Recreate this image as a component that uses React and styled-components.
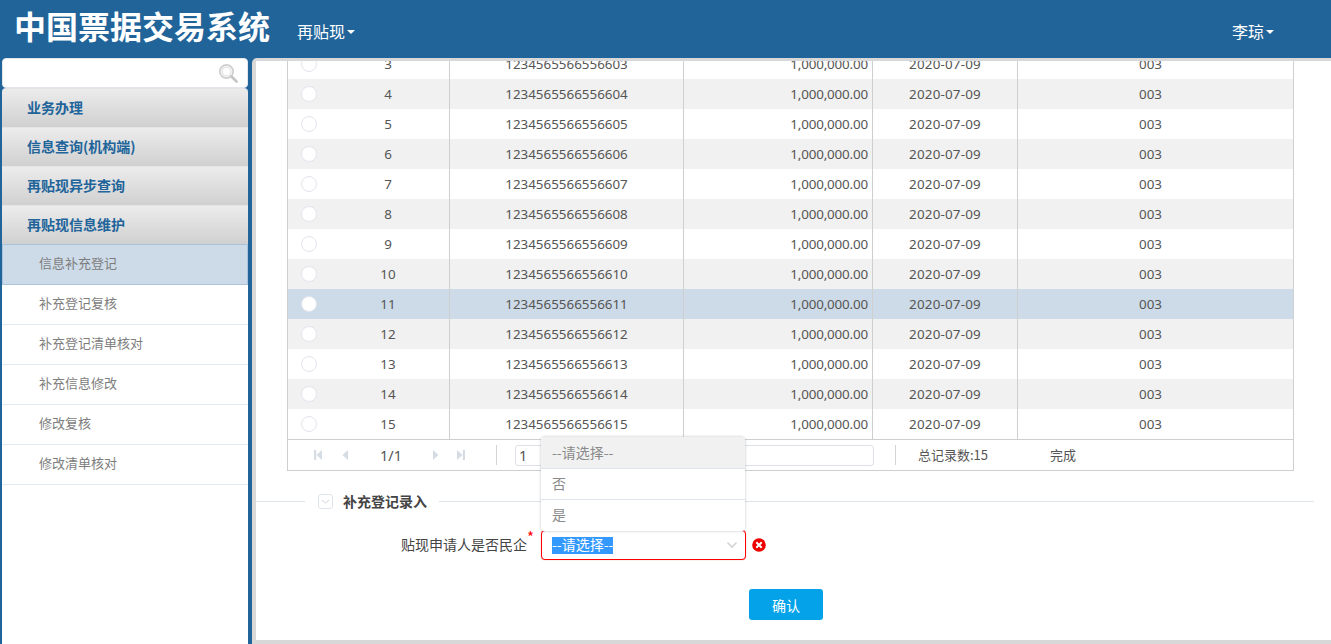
import React from 'react';
import styled, { createGlobalStyle } from 'styled-components';

const Global = createGlobalStyle`
  html, body { margin: 0; padding: 0; height: 100%; overflow: hidden; }
  body { font-family: "Noto Sans", "Noto Sans CJK SC", sans-serif; background: #21649a; }
  * { box-sizing: border-box; }
`;

const Page = styled.div`
  width: 1331px; height: 644px; display: flex; flex-direction: column; overflow: hidden; background: #21649a;
`;
const Header = styled.header`
  height: 58px; flex: none; display: flex; align-items: center; color: #fff; padding: 0 57px 0 14px;
`;
const Title = styled.h1`
  margin: 0 26px 9px 0; font: bold 32px/40px "Noto Sans CJK SC", sans-serif; width: 257px; white-space: nowrap;
`;
const NavMenu = styled.div`
  display: flex; align-items: center; font: 16px/20px "Noto Sans CJK SC", sans-serif; margin-top: 4px; margin-left: ${p => p.$push ? 'auto' : '0'};
`;
const Caret = styled.span`
  width: 0; height: 0; margin-left: 2px; margin-top: 2px; border-left: 4px solid transparent; border-right: 4px solid transparent; border-top: 4px solid #fff;
`;
const Body = styled.div`
  flex: 1; display: flex; min-height: 0; padding-left: 2px;
`;
const Sidebar = styled.aside`
  width: 246px; flex: none; display: flex; flex-direction: column;
`;
const Search = styled.div`
  height: 30px; flex: none; background: #fff; border: 1px solid #e3e7ec; border-radius: 4px; display: flex; align-items: center; justify-content: flex-end; padding-right: 9px;
`;
const MenuHead = styled.div`
  height: 39px; flex: none; padding: 0 0 2px 25px; display: flex; align-items: center;
  background: linear-gradient(#ececed, #d0d0d0); border-top: 1px solid #e4e4e6;
  color: #21649a; font: bold 14px/20px "Noto Sans CJK SC", sans-serif;
  border-radius: ${p => p.$first ? '4px 4px 0 0' : '0'};
`;
const SubList = styled.div`
  flex: 1; background: #fff;
`;
const SubItem = styled.div`
  height: ${p => p.$active ? 41 : 40}px; padding: 0 0 3px ${p => p.$active ? 36 : 37}px; display: flex; align-items: center;
  color: #7d7d7d; font: 13px/20px "Noto Sans CJK SC", sans-serif;
  background: ${p => p.$active ? '#cddbe8' : '#fff'};
  border: ${p => p.$active ? '1px solid #a9c3dd' : 'none'};
  border-bottom: 1px solid ${p => p.$active ? '#a9c3dd' : '#deeaf4'};
`;
const Main = styled.main`
  flex: 1; min-width: 0; margin-left: 4px; background: #d8d8d8; border-radius: 5px 0 0 0; padding: 3px 0 4px 4px; display: flex;
`;
const Panel = styled.div`
  flex: 1; background: #fff; padding: 0 0 0 31px; display: flex; flex-direction: column; min-width: 0;
`;
const Grid = styled.div`
  width: 1007px; height: 410px; flex: none; border: 1px solid #cfcfcf; border-top: none; display: flex; flex-direction: column;
`;
const Rows = styled.div`
  height: 378px; flex: none; overflow: hidden;
`;
const RowList = styled.div`
  margin-top: -12px;
`;
const Row = styled.div`
  height: 30px; display: grid; grid-template-columns: 39px 123px 234px 189px 145px 1fr;
  background: ${p => p.$sel ? '#cddbe8' : p.$alt ? '#f1f1f1' : '#fff'};
  color: #555; font: 13.4px/30px "Noto Sans", sans-serif;
`;
const Cell = styled.div`
  text-align: ${p => p.$align || 'center'};
  padding-right: ${p => p.$pr || 0}px;
  letter-spacing: ${p => p.$ls || 0}px;
  border-right: ${p => p.$line ? '1px solid #cfcfcf' : 'none'};
`;
const RadioCell = styled.div`
  display: flex; align-items: center; justify-content: center; padding-left: 3px;
`;
const Radio = styled.span`
  width: 16px; height: 16px; border-radius: 50%; background: #fff; border: 1px solid #e2e6ec;
`;
const Pager = styled.div`
  flex: 1; border-top: 1px solid #cfcfcf; display: flex; align-items: center; padding-left: 25px; color: #555; font: 13.4px/20px "Noto Sans", sans-serif;
`;
const PagerIcon = styled.svg`
  width: 12px; height: 12px; flex: none; margin-right: ${p => p.$mr}px;
`;
const PageNo = styled.span`
  width: 26px; text-align: center; margin-right: 26px; white-space: nowrap; font-size: 14.5px;
`;
const Sep = styled.span`
  width: 1px; height: 20px; background: #d4d4d4; flex: none; margin-right: ${p => p.$mr}px;
`;
const PageInput = styled.div`
  width: 359px; height: 21px; border: 1px solid #dde1e7; border-radius: 3px; padding-left: 3px; line-height: 19px; margin-right: 21px; flex: none; font-size: 14.5px;
`;
const Stat = styled.span`
  width: ${p => p.$w}px; flex: none; font-family: "Noto Sans CJK SC", sans-serif; font-size: 13px;
`;
const Section = styled.div`
  display: flex; align-items: center; margin: 20px 17px 0 -31px; height: 20px;
`;
const SecLine = styled.span`
  height: 1px; background: #dfe3ea; flex: ${p => p.$w ? `0 0 ${p.$w}px` : 1};
`;
const SecIcon = styled.svg`
  width: 15px; height: 15px; margin: 0 10px 0 13px; flex: none;
`;
const SecTitle = styled.span`
  font: bold 14px/20px "Noto Sans CJK SC", sans-serif; color: #444; width: 96px; flex: none;
`;
const FormRow = styled.div`
  display: flex; align-items: center; margin: 19px 0 0 113px; height: 30px;
`;
const Label = styled.label`
  font: 14px/20px "Noto Sans CJK SC", sans-serif; color: #444; white-space: nowrap; width: 127px; padding-bottom: 2px; text-align: right; flex: none; position: relative;
`;
const Star = styled.span`
  position: absolute; right: -7px; top: -7px; color: #f00; font-size: 15px;
`;
const SelectWrap = styled.div`
  position: relative; width: 205px; height: 30px; margin-left: 14px; flex: none;
`;
const SelectBox = styled.div`
  height: 100%; border: 1px solid #ff0000; border-radius: 4px; box-shadow: 0 0 1px rgba(255,0,0,.6); display: flex; align-items: center; justify-content: space-between; padding: 0 7px 0 10px; background: #fff;
`;
const Selected = styled.span`
  background: #3399ff; color: #fff; font: 14px/15px "Noto Sans CJK SC", sans-serif; padding-bottom: 2px;
`;
const Dropdown = styled.ul`
  position: absolute; left: 0; bottom: 29px; width: 204px; margin: 0; padding: 0; list-style: none; background: #fff; border-radius: 4px; box-shadow: 0 0 3px rgba(90,100,120,.4); overflow: hidden; z-index: 1;
`;
const Option = styled.li`
  height: ${p => p.$h}px; padding: 0 0 ${p => p.$pb || 0}px 11px; display: flex; align-items: center; font: 14px/20px "Noto Sans CJK SC", sans-serif; color: #8a8a8a;
  background: ${p => p.$cur ? '#f1f1f1' : '#fff'};
  border-bottom: ${p => p.$last ? 'none' : '1px solid #dfe3ea'};
`;
const ErrIcon = styled.svg`
  width: 14px; height: 14px; margin-left: 6px; flex: none;
`;
const Actions = styled.div`
  margin: 29px 0 0 462px;
`;
const Button = styled.button`
  width: 74px; height: 31px; border: none; border-radius: 3px; background: #04a3e9; color: #fff; font: 14px/20px "Noto Sans CJK SC", sans-serif; padding: 0;
`;

const Tri = ({ dir, bar, mr }) => (
  <PagerIcon $mr={mr} viewBox="0 0 12 12" fill="#d5dce4">
    {dir === 'l' ? <polygon points="9,1 3.5,6 9,11" /> : <polygon points="3,1 8.5,6 3,11" />}
    {bar && (dir === 'l' ? <rect x="1" y="1" width="2.2" height="10" /> : <rect x="8.8" y="1" width="2.2" height="10" />)}
  </PagerIcon>
);

const heads = ['业务办理', '信息查询(机构端)', '再贴现异步查询', '再贴现信息维护'];
const subs = ['信息补充登记', '补充登记复核', '补充登记清单核对', '补充信息修改', '修改复核', '修改清单核对'];
const rows = Array.from({ length: 13 }, (_, i) => i + 3);

export default function App() {
  return (
    <Page>
      <Global />
      <Header>
        <Title>中国票据交易系统</Title>
        <NavMenu>再贴现<Caret /></NavMenu>
        <NavMenu $push>李琼<Caret /></NavMenu>
      </Header>
      <Body>
        <Sidebar>
          <Search>
            <svg width="20" height="20" viewBox="0 0 20 20" fill="none">
              <circle cx="8.5" cy="8.5" r="6.7" stroke="#d0d0d0" strokeWidth="1.8" />
              <circle cx="8.5" cy="8.5" r="4.4" stroke="#e6e6e6" strokeWidth="1.5" />
              <path d="M13.5 13.5L18.5 18.5" stroke="#c4c4c4" strokeWidth="2.6" strokeLinecap="round" />
            </svg>
          </Search>
          {heads.map((h, i) => <MenuHead key={h} $first={i === 0}>{h}</MenuHead>)}
          <SubList>
            {subs.map((s, i) => <SubItem key={s} $active={i === 0}>{s}</SubItem>)}
          </SubList>
        </Sidebar>
        <Main>
          <Panel>
            <Grid>
              <Rows>
                <RowList>
                  {rows.map(n => (
                    <Row key={n} $alt={n % 2 === 0} $sel={n === 11}>
                      <RadioCell><Radio /></RadioCell>
                      <Cell $line>{n}</Cell>
                      <Cell $line>{1234565566556600 + n}</Cell>
                      <Cell $line $align="right" $pr={4} $ls={-0.16}>1,000,000.00</Cell>
                      <Cell $line $ls={0.2}>2020-07-09</Cell>
                      <Cell $pr={10}>003</Cell>
                    </Row>
                  ))}
                </RowList>
              </Rows>
              <Pager>
                <Tri dir="l" bar mr={14} />
                <Tri dir="l" mr={27} />
                <PageNo>1/1</PageNo>
                <Tri dir="r" mr={12} />
                <Tri dir="r" bar mr={30} />
                <Sep $mr={18} />
                <PageInput>1</PageInput>
                <Sep $mr={22} />
                <Stat $w={132}>总记录数:15</Stat>
                <Stat $w={40}>完成</Stat>
              </Pager>
            </Grid>
            <Section>
              <SecLine $w={49} />
              <SecIcon viewBox="0 0 15 15" fill="none">
                <rect x=".5" y=".5" width="14" height="14" rx="2.5" stroke="#dfe3ea" />
                <path d="M4 6l3.5 3L11 6" stroke="#cfd5de" />
              </SecIcon>
              <SecTitle>补充登记录入</SecTitle>
              <SecLine />
            </Section>
            <FormRow>
              <Label>贴现申请人是否民企<Star>*</Star></Label>
              <SelectWrap>
                <Dropdown>
                  <Option $h={32} $cur $pb={1}>--请选择--</Option>
                  <Option $h={31} $pb={2}>否</Option>
                  <Option $h={31} $last $pb={3}>是</Option>
                </Dropdown>
                <SelectBox>
                  <Selected>--请选择--</Selected>
                  <svg width="12" height="8" viewBox="0 0 12 8" fill="none"><path d="M1.5 1.5L6 6l4.5-4.5" stroke="#d4d4d4" strokeWidth="1.6" /></svg>
                </SelectBox>
              </SelectWrap>
              <ErrIcon viewBox="0 0 14 14">
                <circle cx="7" cy="7" r="6.8" fill="#ee0000" />
                <path d="M4.3 4.3l5.4 5.4M9.7 4.3l-5.4 5.4" stroke="#fff" strokeWidth="2" />
              </ErrIcon>
            </FormRow>
            <Actions><Button>确认</Button></Actions>
          </Panel>
        </Main>
      </Body>
    </Page>
  );
}
